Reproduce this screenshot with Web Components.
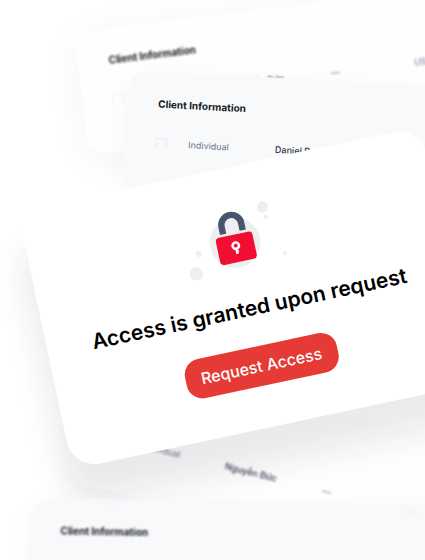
<!DOCTYPE html>
<html lang="en">
<head>
<meta charset="utf-8">
<meta name="viewport" content="width=device-width, initial-scale=1">
<title>Request Access</title>
<style>
    body {
        margin: 0;
        background: #fff;
        font-family: Inter, "Liberation Sans", sans-serif;
    }
</style>
</head>
<body>
<card-stage>
    <client-card class="top" name="Nguyễn Đức" code="US"></client-card>
    <client-card class="low" name="Nguyễn Đức" code="US"></client-card>
    <client-card class="mid" name="Daniel R."></client-card>
    <access-card>
        <lock-icon slot="icon"></lock-icon>
        Access is granted upon request
        <request-button slot="action">Request Access</request-button>
    </access-card>
    <client-card class="base" name="Daniel R."></client-card>
</card-stage>

<template id="card-stage">
<style>
    :host {
        display: block;
        position: relative;
        height: 100vh;
        overflow: hidden;
    }
    /* loose sheets lying over each other, each turned on its top left corner */
    ::slotted(*) {
        position: absolute;
        transform-origin: 0 0;
    }
    ::slotted(.top) {
        left: 74px;
        top: 32px;
        transform: rotate(-7deg);
        filter: blur(1px);
        --sheet: #fefefe;
        --sheet-shadow: 0 8px 40px rgba(30, 30, 30, .05);
        --box-line: #f0f0f1;
    }
    ::slotted(.low) {
        left: 97px;
        top: 360px;
        transform: rotate(14deg);
        filter: blur(1px);
        --sheet: #fefefe;
    }
    ::slotted(.mid) {
        left: 129px;
        top: 70px;
        transform: rotate(3deg);
        --sheet: #f7f9fb;
    }
    ::slotted(access-card) {
        left: 18px;
        top: 212px;
        width: 97%;
        transform: rotate(-12deg);
    }
    ::slotted(.base) {
        left: 30px;
        top: 498px;
        transform: rotate(1deg);
        filter: blur(1px);
        --sheet: rgba(247, 249, 251, .95);
    }
</style>
<slot></slot>
</template>

<template id="client-card">
<style>
    :host {
        display: block;
        box-sizing: border-box;
        width: 120%;
        padding: 24px 30px;
        border-radius: 20px;
        background: var(--sheet, #fff);
        box-shadow: var(--sheet-shadow, 0 8px 32px rgba(30, 40, 60, .03));
    }
    h2 {
        margin: 0 0 24px;
        padding-left: 1px;
        font-size: 10px;
        line-height: 16px;
        font-weight: 700;
        color: #16181d;
    }
    .row {
        display: grid;
        grid-template-columns: 33px 87px 100px 84px 1fr;
        align-items: center;
        min-height: 16px;
        padding-bottom: 20px;
        font-size: 9px;
        line-height: 16px;
        color: #6b7485;
    }
    input {
        appearance: none;
        box-sizing: border-box;
        width: 12px;
        height: 12px;
        margin: 0;
        border: 1px solid var(--box-line, #e6e8eb);
        border-bottom-color: transparent;
        border-radius: 3px;
        background: transparent;
    }
    .name {
        font-weight: 500;
        color: #2f3747;
    }
</style>
<h2>Client Information</h2>
<div class="row">
    <input type="checkbox" id="pick">
    <label for="pick">Individual</label>
    <span class="name"></span>
    <span class="dash"></span>
    <span class="code"></span>
</div>
</template>

<template id="access-card">
<style>
    :host {
        display: flex;
        flex-direction: column;
        align-items: center;
        gap: 20px;
        box-sizing: border-box;
        padding: 39px 24px 42px;
        border-radius: 28px;
        background: #fff;
        box-shadow: -8px 36px 32px rgba(30, 36, 50, .09);
    }
    h1 {
        margin: 0 0 6px;
        font-size: 21px;
        line-height: 24px;
        font-weight: 600;
        color: #000;
        white-space: nowrap;
    }
</style>
<slot name="icon"></slot>
<h1><slot></slot></h1>
<slot name="action"></slot>
</template>

<template id="lock-icon">
<style>
    :host {
        display: block;
    }
    svg {
        display: block;
    }
</style>
<svg width="112" height="72" viewBox="-56 -36 112 72" fill="none" aria-hidden="true">
    <g fill="#eeeff1">
        <circle r="25.3"/>
        <circle cx="34.4" cy="-29.1" r="5.7"/>
        <circle cx="35.2" cy="-18.7" r="2.2"/>
        <circle cx="46.7" cy="20.6" r="2.2"/>
        <circle cx="-38" cy="3.6" r="3"/>
        <circle cx="-44.4" cy="22.6" r="6.7"/>
    </g>
    <path d="M-10 -10.5V-18A10 10 0 0 1 10 -18V-10.5" stroke="#47566b" stroke-width="6.4"/>
    <rect x="-18.7" y="-8" width="37.4" height="27.8" rx="4" fill="#f20d33"/>
    <circle cy="3.2" r="3.2" stroke="#fff" stroke-width="2.6"/>
    <path d="M0 6V11.8M0 9.2H2" stroke="#fff" stroke-width="2.4"/>
</svg>
</template>

<template id="request-button">
<style>
    :host {
        display: block;
    }
    button {
        height: 40px;
        padding: 0 16px;
        border: 0;
        border-radius: 16px;
        background: #e53a36;
        color: #fff;
        font: 500 16px/20px Inter, "Liberation Sans", sans-serif;
        cursor: pointer;
    }
</style>
<button type="button"><slot></slot></button>
</template>

<script>
class BaseElement extends HTMLElement {
  constructor() {
    super();
    const template = document.getElementById(this.localName);
    this.attachShadow({ mode: 'open' });
    this.shadowRoot.appendChild(template.content.cloneNode(true));
  }
}

class CardStage extends BaseElement {}
class AccessCard extends BaseElement {}
class LockIcon extends BaseElement {}
class RequestButton extends BaseElement {}

class ClientCard extends BaseElement {
  connectedCallback() {
    const code = this.getAttribute('code');
    this.shadowRoot.querySelector('.name').textContent = this.getAttribute('name');
    if (code) {
      this.shadowRoot.querySelector('.dash').textContent = '—';
      this.shadowRoot.querySelector('.code').textContent = code;
    }
  }
}

customElements.define('card-stage', CardStage);
customElements.define('access-card', AccessCard);
customElements.define('lock-icon', LockIcon);
customElements.define('request-button', RequestButton);
customElements.define('client-card', ClientCard);
</script>
</body>
</html>
